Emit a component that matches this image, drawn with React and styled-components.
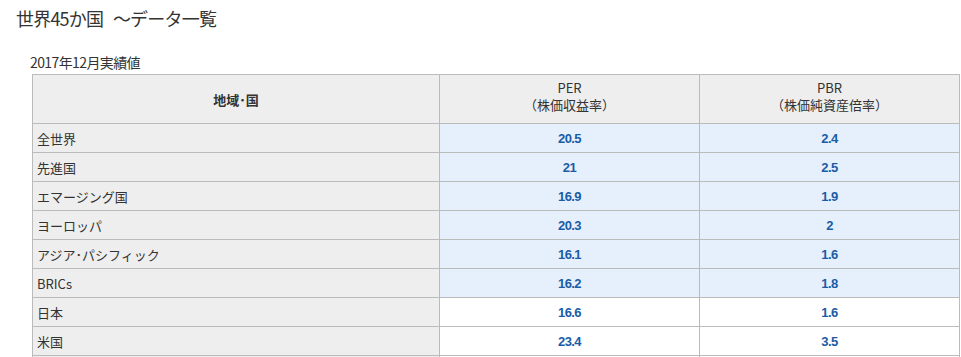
import styled, { createGlobalStyle } from "styled-components";

const GlobalStyle = createGlobalStyle`
  body {
    margin: 0;
    background: #fff;
    font-family: "Noto Sans CJK JP", "Liberation Sans", sans-serif;
    color: #333;
  }
`;

const Page = styled.div`
  padding: 6px 0 0 16px;
`;

const Title = styled.h2`
  margin: 0;
  font-size: 18px;
  font-weight: normal;
  line-height: 24px;
  color: #333;
  letter-spacing: -0.8px;
`;

const Caption = styled.p`
  margin: 24px 0 0 14px;
  font-size: 14px;
  line-height: 16px;
  color: #333;
  letter-spacing: -0.6px;
`;

const Table = styled.table`
  margin: 4px 0 0 16px;
  width: 928px;
  border-collapse: collapse;
  table-layout: fixed;
  font-size: 13px;
  col:first-child {
    width: 407px;
  }
`;

const HeadCell = styled.th`
  height: ${({ $stack }) => ($stack ? "42px" : "48px")};
  padding: 0 0 ${({ $stack }) => ($stack ? "6px" : "0")};
  background: #eee;
  border: 1px solid #bbb;
  font-weight: ${({ $stack }) => ($stack ? "normal" : "bold")};
  line-height: 17px;
  color: #333;
`;

const HeadLine = styled.span`
  display: block;
  height: 17px;
`;

const NameCell = styled.td`
  height: 28px;
  padding: 0 0 0 4px;
  background: #eee;
  border: 1px solid #bbb;
  color: #333;
`;

const NumCell = styled.td`
  padding: 0;
  text-align: center;
  background: ${({ $hl }) => ($hl ? "#e6f0fc" : "#fff")};
  border: 1px solid #bbb;
  color: #1a5ca6;
  font-family: "Liberation Sans", Arial, sans-serif;
  font-weight: bold;
  letter-spacing: -0.6px;
`;

const rows = [
  ["全世界", "20.5", "2.4", true],
  ["先進国", "21", "2.5", true],
  ["エマージング国", "16.9", "1.9", true],
  ["ヨーロッパ", "20.3", "2", true],
  ["アジア･パシフィック", "16.1", "1.6", true],
  ["BRICs", "16.2", "1.8", true],
  ["日本", "16.6", "1.6", false],
  ["米国", "23.4", "3.5", false],
  ["英国", "17.1", "1.8", false],
];

const App = () => (
  <Page>
    <GlobalStyle />
    <Title>世界45か国&nbsp;&nbsp;&nbsp;～データ一覧</Title>
    <Caption>2017年12月実績値</Caption>
    <Table>
      <colgroup>
        <col />
        <col />
        <col />
      </colgroup>
      <thead>
        <tr>
          <HeadCell>地域･国</HeadCell>
          <HeadCell $stack>
            <HeadLine>PER</HeadLine>
            <HeadLine>（株価収益率）</HeadLine>
          </HeadCell>
          <HeadCell $stack>
            <HeadLine>PBR</HeadLine>
            <HeadLine>（株価純資産倍率）</HeadLine>
          </HeadCell>
        </tr>
      </thead>
      <tbody>
        {rows.map(([name, per, pbr, hl]) => (
          <tr key={name}>
            <NameCell>{name}</NameCell>
            <NumCell $hl={hl}>{per}</NumCell>
            <NumCell $hl={hl}>{pbr}</NumCell>
          </tr>
        ))}
      </tbody>
    </Table>
  </Page>
);

export default App;
